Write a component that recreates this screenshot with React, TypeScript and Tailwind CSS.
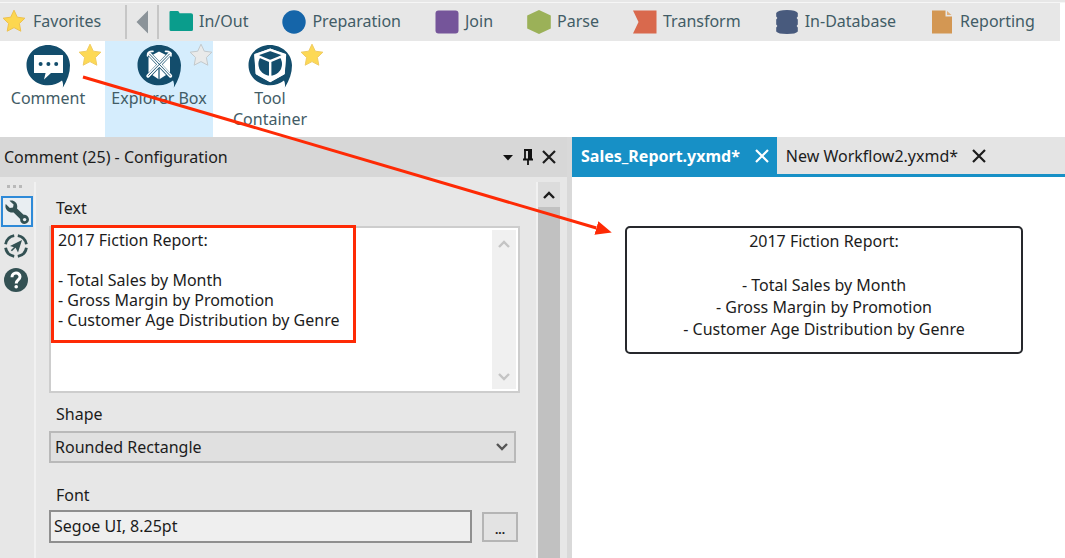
import { useState, type ReactNode } from "react";

const reportText = `2017 Fiction Report:

- Total Sales by Month
- Gross Margin by Promotion
- Customer Age Distribution by Genre`;

function Star({ fill, stroke }: { fill: string; stroke: string }) {
  return (
    <svg viewBox="0 0 24 24" className="size-6" aria-hidden="true">
      <path
        d="M12 1.2 L15.3 8.2 L22.9 9.2 L17.4 14.5 L18.8 22.2 L12 18.6 L5.2 22.2 L6.6 14.5 L1.1 9.2 L8.7 8.2 Z"
        fill={fill}
        stroke={stroke}
        strokeLinejoin="round"
      />
    </svg>
  );
}

const categories: { name: string; icon: ReactNode }[] = [
  {
    name: "In/Out",
    icon: (
      <path
        d="M1.5 1 H8.5 Q9.5 1 10 2 L10.6 3.2 H22 Q24 3.2 24 5 V19.5 Q24 21 22.5 21 H2.2 Q0.5 21 0.5 19.5 V2 Q0.5 1 1.5 1 Z"
        fill="#0a9d8c"
      />
    ),
  },
  { name: "Preparation", icon: <circle cx="12" cy="12" r="11.7" fill="#1565a9" /> },
  { name: "Join", icon: <rect x="0.5" y="0.5" width="23" height="23" rx="3" fill="#75559a" /> },
  { name: "Parse", icon: <path d="M12 0 L23.8 5.6 V18.4 L12 24 L0.2 18.4 V5.6 Z" fill="#9bb158" /> },
  { name: "Transform", icon: <path d="M0 0.5 H23.5 V23.5 H0 L5.5 12 Z" fill="#d9694d" /> },
  {
    name: "In-Database",
    icon: (
      <path
        d="M1.2 3 Q3 0 12 0 Q21 0 22.8 3 V6.6 L21.6 8 L22.8 9.4 V14.6 L21.6 16 L22.8 17.4 V21.5 Q21 24 12 24 Q3 24 1.2 21.5 V17.4 L2.4 16 L1.2 14.6 V9.4 L2.4 8 L1.2 6.6 Z"
        fill="#485a7d"
      />
    ),
  },
  {
    name: "Reporting",
    icon: (
      <>
        <path d="M2 0.5 H15.5 V6.5 H22 V23.5 H2 Z" fill="#d39753" />
        <path d="M17 1 L21.5 5 H17 Z" fill="#e0b07c" />
      </>
    ),
  },
];

const bubble = (
  <path
    d="M22 1 C34 1 44 10 44 21.3 C44 29 41.5 36 36.8 43.8 C37.3 41 37 38.6 36 36.6 C32.2 39.6 27.4 41.3 22 41.3 C10 41.3 0.5 32.5 0.5 21.2 C0.5 9.8 10 1 22 1 Z"
    fill="#134d6c"
  />
);

const tools: { name: string; starred: boolean; active: boolean; icon: ReactNode }[] = [
  {
    name: "Comment",
    starred: true,
    active: false,
    icon: (
      <>
        <path d="M8 11 H36.5 Q37 11 37 11.6 V28.4 Q37 29 36.4 29 H25 L18 35.4 L19.6 29 H8.6 Q8 29 8 28.4 V11.6 Q8 11 8 11 Z" fill="#fff" />
        <circle cx="14.6" cy="20" r="2" fill="#134d6c" />
        <circle cx="22.4" cy="20" r="2" fill="#134d6c" />
        <circle cx="30.2" cy="20" r="2" fill="#134d6c" />
      </>
    ),
  },
  {
    name: "Explorer Box",
    starred: false,
    active: true,
    icon: (
      <>
        <path d="M11.5 13 L22 7.5 L33 13 V28.5 L22 35.5 L11.5 28.5 Z" fill="#fff" />
        <path d="M22 20 V36" stroke="#134d6c" strokeWidth="1.2" fill="none" />
        <g fill="none" strokeLinecap="round" strokeLinejoin="round">
          <path d="M12 9.5 L33 32 M33 9.5 L11.5 32" stroke="#134d6c" strokeWidth="4.6" />
          <path d="M12 9.5 L33.5 32 M33 9.5 L11 32" stroke="#fff" strokeWidth="3.4" />
          <path d="M12.5 10 L33 31.5 M32.5 10 L11.5 31.5" stroke="#134d6c" strokeWidth="0.9" />
          <path d="M10.5 12 Q10 7 16 7.4 M28.5 7.4 Q34.5 7 34 12" stroke="#fff" strokeWidth="1.6" />
        </g>
      </>
    ),
  },
  {
    name: "Tool Container",
    starred: true,
    active: false,
    icon: (
      <>
        <path d="M22.2 4.6 L38 10.4 L36.6 30 L22.2 38 L7.8 30 L6.4 10.4 Z" fill="#fff" />
        <circle cx="22.2" cy="20" r="11.8" fill="#134d6c" />
        <path d="M9 10.8 L22.2 6 L35.4 10.8 L22.2 15.6 Z" fill="#134d6c" />
        <g fill="none" stroke="#fff" strokeWidth="2.4" strokeLinejoin="round">
          <path d="M22.2 5.8 L37 11 L35.6 29.5 L22.2 37 L8.8 29.5 L7.4 11 Z" />
          <path d="M7.4 11 L22.2 17.2 L37 11 M22.2 17.2 V37" />
        </g>
      </>
    ),
  },
];

function CloseIcon({ className }: { className: string }) {
  return (
    <svg viewBox="0 0 14 14" className={className} aria-hidden="true">
      <path d="M1 1 L13 13 M13 1 L1 13" stroke="currentColor" strokeWidth="2.2" fill="none" />
    </svg>
  );
}

function Chevron({ d, className }: { d: string; className: string }) {
  return (
    <svg viewBox="0 0 12 8" className={className} aria-hidden="true">
      <path d={d} fill="none" stroke="currentColor" strokeWidth="2.4" />
    </svg>
  );
}

const up = "M1 7 L6 2 L11 7";
const down = "M1 1 L6 6 L11 1";

function CategoryBar() {
  return (
    <nav aria-label="Tool categories" className="mr-[5px] flex h-[38px] items-center bg-[#e7e7e7] leading-5 text-[#425c66]">
      <button type="button" className="flex h-full w-[125px] shrink-0 items-center gap-[7px] pb-0.5 pl-0.5">
        <Star fill="#fdd74f" stroke="#eec14e" />
        Favorites
      </button>
      <div className="flex h-[34px] w-[34px] shrink-0 items-center justify-center border-x-2 border-[#c6c6c6]">
        <button type="button" aria-label="Scroll categories left">
          <svg viewBox="0 0 12 24" className="h-6 w-3" aria-hidden="true">
            <path d="M12 0.5 V23.5 L0.5 12 Z" fill="#8b9399" />
          </svg>
        </button>
      </div>
      <div className="flex min-w-0 items-center gap-[34px] overflow-hidden pl-2.5">
        {categories.map((c) => (
          <button key={c.name} type="button" className="flex shrink-0 items-center gap-1.5">
            <svg viewBox="0 0 24 24" className="size-6" aria-hidden="true">
              {c.icon}
            </svg>
            <span className="pb-0.5">{c.name}</span>
          </button>
        ))}
      </div>
    </nav>
  );
}

function ToolPalette() {
  return (
    <div className="-ml-1.5 flex h-24 gap-[3px]">
      {tools.map((t) => (
        <div key={t.name} className={t.active ? "relative w-[108px] bg-[#d5edfd]" : "relative w-[108px]"}>
          <button type="button" className="flex w-full flex-col items-center pt-[3px] leading-[21px] text-[#425c66]">
            <svg viewBox="0 0 45 44" className="h-11 w-[45px]" aria-hidden="true">
              {bubble}
              {t.icon}
            </svg>
            <span className={t.name.startsWith("Tool") ? "w-20" : "whitespace-nowrap"}>{t.name}</span>
          </button>
          <button type="button" aria-label={`Favorite ${t.name}`} className="absolute top-0.5 right-0">
            {t.starred ? <Star fill="#fdd955" stroke="#f0cc63" /> : <Star fill="#e9eaea" stroke="#c3c9cc" />}
          </button>
        </div>
      ))}
    </div>
  );
}

function SideRail() {
  return (
    <div className="flex w-[34px] shrink-0 flex-col items-start pt-2">
      <div className="flex h-[11px] gap-[3px] pl-[7px]">
        <i className="size-[3px] bg-[#b9b9b9]" />
        <i className="size-[3px] bg-[#b9b9b9]" />
        <i className="size-[3px] bg-[#b9b9b9]" />
      </div>
      <button
        type="button"
        aria-label="Configuration"
        className="ml-px flex h-[31px] w-8 items-center justify-center border-2 border-[#2e8ad8] bg-[#e9eef2]"
      >
        <svg viewBox="0 0 24 24" className="size-6" aria-hidden="true">
          <path
            d="M4.5 0.8 C8.5 -0.6 12.8 2.6 12.2 7.2 L12 8.6 L18.6 14.8 C21.4 14.4 24 16.8 24 19.6 C24 22 22 24 19.5 24 C16.8 24 14.8 21.8 15.2 19 L8.6 12.4 C4.6 13.4 0.4 10 0.4 6.2 C0.4 5.4 0.6 4.6 0.8 4 L4.8 8 L8 7.4 L8.6 4.6 Z"
            fill="#335153"
          />
          <circle cx="19.6" cy="19.6" r="1.7" fill="#e9eef2" />
        </svg>
      </button>
      <button type="button" aria-label="Navigation" className="mt-[7px] ml-1">
        <svg viewBox="0 0 24 24" className="size-6" aria-hidden="true">
          <g fill="none" stroke="#335153" strokeWidth="2.8">
            <path d="M13.8 1.6 A10.5 10.5 0 0 1 22.4 10.2" />
            <path d="M22.4 13.8 A10.5 10.5 0 0 1 13.8 22.4" />
            <path d="M10.2 22.4 A10.5 10.5 0 0 1 1.6 13.8" />
            <path d="M1.6 10.2 A10.5 10.5 0 0 1 10.2 1.6" />
          </g>
          <path d="M18 6 L14 18.5 L11.6 13.8 L6 12 Z" fill="#335153" />
          <path d="M11.4 12.8 L7.4 16.8" stroke="#335153" strokeWidth="1.6" />
        </svg>
      </button>
      <button type="button" aria-label="Help" className="mt-2.5 ml-1">
        <svg viewBox="0 0 24 24" className="size-6" aria-hidden="true">
          <circle cx="12" cy="12" r="12" fill="#335153" />
          <path d="M8 9.2 C8 3.8 16 3.8 16 8.8 C16 12 12.2 11.8 12.2 15.4" fill="none" stroke="#fff" strokeWidth="3" />
          <circle cx="12.2" cy="18.8" r="1.8" fill="#fff" />
        </svg>
      </button>
    </div>
  );
}

function ConfigurationPanel() {
  const [text, setText] = useState(reportText);
  return (
    <section aria-label="Configuration" className="flex min-w-0 flex-col border-r-[5px] border-[#d9d9d9] bg-[#e7e7e7]">
      <header className="flex h-10 items-center bg-[#d7d7d7] pr-[11px] pl-1">
        <h2 className="grow truncate">Comment (25) - Configuration</h2>
        <button type="button" aria-label="Panel menu" className="mr-2">
          <svg viewBox="0 0 12 7" className="h-[7px] w-3" aria-hidden="true">
            <path d="M1 1 H11 L6 6.5 Z" fill="#111" />
          </svg>
        </button>
        <button type="button" aria-label="Pin panel" className="mr-2">
          <svg viewBox="0 0 12 18" className="h-[18px] w-3" aria-hidden="true">
            <path d="M2 2 H10 M3 2 V11 M1 11.5 H11 M6 11 V17" fill="none" stroke="#111" strokeWidth="1.8" />
            <path d="M6 2 H10 V11 H6 Z" fill="#111" />
          </svg>
        </button>
        <button type="button" aria-label="Close panel">
          <CloseIcon className="size-3.5" />
        </button>
      </header>

      <div className="flex grow">
        <SideRail />
        <form className="mt-[5px] flex min-w-0 grow flex-col border-x-2 border-[#f1f1f1] pr-4 pl-[13px]">
          <label htmlFor="text" className="mt-4 ml-[7px] leading-5">
            Text
          </label>
          <div className="relative mt-2 flex h-[167px] border-2 border-[#cdcdcd] bg-white">
            <textarea
              id="text"
              value={text}
              onChange={(e) => setText(e.target.value)}
              spellCheck={false}
              className="min-w-0 grow resize-none overflow-hidden px-[7px] py-0.5 leading-5 outline-none"
            />
            <div className="m-0.5 flex w-6 shrink-0 flex-col items-center justify-between bg-[#f0f0f0] pt-2.5 pb-2 text-[#c4c4c4]">
              <Chevron d={up} className="h-2 w-3" />
              <Chevron d={down} className="h-2 w-3" />
            </div>
            <div className="pointer-events-none absolute -top-[3px] left-0 h-[118px] w-[305px] border-[3px] border-[#fe2a05]" />
          </div>

          <label htmlFor="shape" className="mt-[11px] ml-[7px] leading-5">
            Shape
          </label>
          <div className="relative mt-[7px] mr-1">
            <select
              id="shape"
              defaultValue="Rounded Rectangle"
              className="h-8 w-full appearance-none border-2 border-[#b9b9b9] bg-[#e0e0e0] px-1 leading-5"
            >
              <option>Rectangle</option>
              <option>Rounded Rectangle</option>
              <option>Circle</option>
            </select>
            <Chevron d={down} className="pointer-events-none absolute top-3 right-2 h-2 w-3 text-[#555]" />
          </div>

          <label htmlFor="font" className="mt-[22px] ml-[7px] leading-5">
            Font
          </label>
          <div className="mt-[5px] mr-0.5 flex items-center gap-2.5">
            <input
              id="font"
              readOnly
              value="Segoe UI, 8.25pt"
              className="h-[33px] min-w-0 grow border-2 border-[#8f8f8f] bg-[#efefef] px-[3px] pb-0.5 outline-none"
            />
            <button
              type="button"
              aria-label="Choose font"
              className="flex h-[30px] w-9 shrink-0 items-end justify-center border-2 border-[#b5b5b5] bg-[#e3e3e3] text-xs leading-5 font-bold"
            >
              ...
            </button>
          </div>
        </form>
        <div className="mt-[5px] mr-[7px] flex w-[22px] shrink-0 flex-col bg-[#c1c1c1]">
          <div className="flex h-[25px] items-center justify-center bg-[#dcdcdc]">
            <Chevron d={up} className="h-2 w-3" />
          </div>
        </div>
      </div>
    </section>
  );
}

function Workspace() {
  return (
    <main className="flex min-w-0 flex-col bg-white">
      <div className="flex h-10 border-b-[3px] border-[#1790c6] bg-[#e4e4e4]">
        <div className="flex shrink-0 items-center gap-[15px] bg-[#1790c6] pr-2 pl-[9px] text-white">
          <button type="button" className="font-bold">
            Sales_Report.yxmd*
          </button>
          <button type="button" aria-label="Close Sales_Report.yxmd">
            <CloseIcon className="size-3.5" />
          </button>
        </div>
        <div className="flex shrink-0 items-center gap-3.5 pr-2 pl-[9px]">
          <button type="button">New Workflow2.yxmd*</button>
          <button type="button" aria-label="Close New Workflow2.yxmd">
            <CloseIcon className="size-3.5" />
          </button>
        </div>
      </div>
      <div className="relative grow">
        <div className="absolute top-[49px] left-[53px] h-32 w-[398px] rounded-[5px] border-2 border-[#26282c] pt-0.5 text-center leading-[22px] whitespace-pre-line">
          {reportText}
        </div>
      </div>
    </main>
  );
}

export default function App() {
  return (
    <div className="relative flex min-h-screen flex-col bg-white font-['Noto_Sans',sans-serif] text-base text-[#1c1c1c]">
      <div className="h-[3px] border-b border-[#f6f6f6] bg-[#e7e7e7]" />
      <CategoryBar />
      <ToolPalette />
      <div className="grid grow grid-cols-[572fr_493fr]">
        <ConfigurationPanel />
        <Workspace />
      </div>
      <svg className="pointer-events-none absolute inset-0 h-full w-full" aria-hidden="true">
        <defs>
          <marker id="head" markerUnits="userSpaceOnUse" markerWidth="18" markerHeight="16" refX="0" refY="7.5" orient="auto">
            <path d="M0 0.5 L16 7.5 L0 14.5 Z" fill="#fe2a05" />
          </marker>
        </defs>
        <line x1="83" y1="77" x2="56%" y2="228" stroke="#fe2a05" strokeWidth="3" markerEnd="url(#head)" />
      </svg>
    </div>
  );
}
